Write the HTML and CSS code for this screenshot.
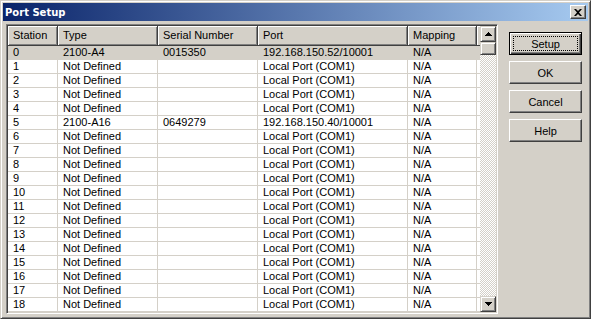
FILE: index.html
```html
<!DOCTYPE html>
<html lang="en">
<head>
    <meta charset="UTF-8">
    <title>Port Setup</title>
    <link rel="stylesheet" href="styles.css">
</head>
<body>
    <div class="window">
        <div class="titlebar">
            <span class="title">Port Setup</span>
            <span class="close">
                <svg width="8" height="7" viewBox="0 0 8 7"><path d="M0 0h2l2 2 2-2h2L5 3.5 8 7H6L4 5 2 7H0l3-3.5z" fill="#000"/></svg>
            </span>
        </div>

        <div class="main">
            <div class="list">
                <div class="grid">
                    <div class="row head">
                        <div class="cell">Station</div>
                        <div class="cell">Type</div>
                        <div class="cell">Serial Number</div>
                        <div class="cell">Port</div>
                        <div class="cell">Mapping</div>
                        <div class="cell filler"></div>
                    </div>
                    <div class="row sel"><div class="cell">0</div><div class="cell">2100-A4</div><div class="cell">0015350</div><div class="cell">192.168.150.52/10001</div><div class="cell">N/A</div><div class="cell"></div></div>
                    <div class="row"><div class="cell">1</div><div class="cell">Not Defined</div><div class="cell"></div><div class="cell">Local Port (COM1)</div><div class="cell">N/A</div><div class="cell"></div></div>
                    <div class="row"><div class="cell">2</div><div class="cell">Not Defined</div><div class="cell"></div><div class="cell">Local Port (COM1)</div><div class="cell">N/A</div><div class="cell"></div></div>
                    <div class="row"><div class="cell">3</div><div class="cell">Not Defined</div><div class="cell"></div><div class="cell">Local Port (COM1)</div><div class="cell">N/A</div><div class="cell"></div></div>
                    <div class="row"><div class="cell">4</div><div class="cell">Not Defined</div><div class="cell"></div><div class="cell">Local Port (COM1)</div><div class="cell">N/A</div><div class="cell"></div></div>
                    <div class="row"><div class="cell">5</div><div class="cell">2100-A16</div><div class="cell">0649279</div><div class="cell">192.168.150.40/10001</div><div class="cell">N/A</div><div class="cell"></div></div>
                    <div class="row"><div class="cell">6</div><div class="cell">Not Defined</div><div class="cell"></div><div class="cell">Local Port (COM1)</div><div class="cell">N/A</div><div class="cell"></div></div>
                    <div class="row"><div class="cell">7</div><div class="cell">Not Defined</div><div class="cell"></div><div class="cell">Local Port (COM1)</div><div class="cell">N/A</div><div class="cell"></div></div>
                    <div class="row"><div class="cell">8</div><div class="cell">Not Defined</div><div class="cell"></div><div class="cell">Local Port (COM1)</div><div class="cell">N/A</div><div class="cell"></div></div>
                    <div class="row"><div class="cell">9</div><div class="cell">Not Defined</div><div class="cell"></div><div class="cell">Local Port (COM1)</div><div class="cell">N/A</div><div class="cell"></div></div>
                    <div class="row"><div class="cell">10</div><div class="cell">Not Defined</div><div class="cell"></div><div class="cell">Local Port (COM1)</div><div class="cell">N/A</div><div class="cell"></div></div>
                    <div class="row"><div class="cell">11</div><div class="cell">Not Defined</div><div class="cell"></div><div class="cell">Local Port (COM1)</div><div class="cell">N/A</div><div class="cell"></div></div>
                    <div class="row"><div class="cell">12</div><div class="cell">Not Defined</div><div class="cell"></div><div class="cell">Local Port (COM1)</div><div class="cell">N/A</div><div class="cell"></div></div>
                    <div class="row"><div class="cell">13</div><div class="cell">Not Defined</div><div class="cell"></div><div class="cell">Local Port (COM1)</div><div class="cell">N/A</div><div class="cell"></div></div>
                    <div class="row"><div class="cell">14</div><div class="cell">Not Defined</div><div class="cell"></div><div class="cell">Local Port (COM1)</div><div class="cell">N/A</div><div class="cell"></div></div>
                    <div class="row"><div class="cell">15</div><div class="cell">Not Defined</div><div class="cell"></div><div class="cell">Local Port (COM1)</div><div class="cell">N/A</div><div class="cell"></div></div>
                    <div class="row"><div class="cell">16</div><div class="cell">Not Defined</div><div class="cell"></div><div class="cell">Local Port (COM1)</div><div class="cell">N/A</div><div class="cell"></div></div>
                    <div class="row"><div class="cell">17</div><div class="cell">Not Defined</div><div class="cell"></div><div class="cell">Local Port (COM1)</div><div class="cell">N/A</div><div class="cell"></div></div>
                    <div class="row"><div class="cell">18</div><div class="cell">Not Defined</div><div class="cell"></div><div class="cell">Local Port (COM1)</div><div class="cell">N/A</div><div class="cell"></div></div>
                </div>

                <div class="vscroll">
                    <div class="sbtn">
                        <svg width="7" height="4" viewBox="0 0 7 4"><path d="M3 0h1v1h1v1h1v1h1v1H0V3h1V2h1V1h1z" fill="#000"/></svg>
                    </div>
                    <div class="thumb"></div>
                    <div class="track"></div>
                    <div class="sbtn">
                        <svg width="7" height="4" viewBox="0 0 7 4"><path d="M0 0h7v1H6v1H5v1H4v1H3V3H2V2H1V1H0z" fill="#000"/></svg>
                    </div>
                </div>
            </div>

            <div class="buttons">
                <button class="btn default">Setup</button>
                <button class="btn">OK</button>
                <button class="btn">Cancel</button>
                <button class="btn">Help</button>
            </div>
        </div>
    </div>
</body>
</html>
```

FILE: styles.css
```css
body {
    margin: 0;
    background-color: #d4d0c8;
    font-family: "Liberation Sans", Arial, sans-serif;
    font-size: 11px;
    color: #000;
}
.window {
    width: 591px;
    height: 319px;
    box-sizing: border-box;
    background-color: #d4d0c8;
    border: 1px solid;
    border-color: #d4d0c8 #404040 #404040 #d4d0c8;
    box-shadow: inset 1px 1px #fff, inset -1px -1px #808080;
    padding: 2px;
    display: flex;
    flex-direction: column;
}
.titlebar {
    height: 18px;
    flex: none;
    background: linear-gradient(to right, #0a246a, #a6caf0);
    display: flex;
    align-items: center;
    justify-content: space-between;
    padding: 0 2px;
}
.title {
    color: #fff;
    font-family: "DejaVu Sans", sans-serif;
    font-weight: bold;
    font-size: 10px;
}
.close {
    width: 16px;
    height: 14px;
    box-sizing: border-box;
    background-color: #d4d0c8;
    border: 1px solid;
    border-color: #fff #404040 #404040 #fff;
    box-shadow: inset -1px -1px #808080;
    display: flex;
    align-items: center;
    justify-content: center;
}
.close svg {
    margin-left: -1px;
}
.main {
    display: flex;
    flex: 1;
    padding: 3px 0 0 3px;
}
.list {
    width: 492px;
    height: 290px;
    box-sizing: border-box;
    border: 1px solid;
    border-color: #808080 #fff #fff #808080;
    box-shadow: inset 1px 1px #404040, inset -1px -1px #d4d0c8;
    padding: 1px;
    display: flex;
    background-color: #fff;
    overflow: hidden;
}
.grid {
    width: 472px;
    overflow: hidden;
}
.row {
    display: grid;
    grid-template-columns: 50px 100px 100px 150px 69px 1fr;
    height: 14px;
    box-sizing: border-box;
    border-bottom: 1px solid #d4d0c8;
}
.cell {
    box-sizing: border-box;
    border-right: 1px solid #d4d0c8;
    padding-left: 5px;
    line-height: 13px;
    white-space: nowrap;
    overflow: hidden;
}
.row.head {
    height: 20px;
    border-bottom: none;
}
.head .cell {
    background-color: #d4d0c8;
    box-shadow: inset 1px 1px #fff, inset -1px -1px #808080;
    border-right: 1px solid #404040;
    border-bottom: 1px solid #404040;
    line-height: 19px;
}
.head .filler {
    border-right: none;
    box-shadow: inset 1px 1px #fff;
}
.row.sel {
    background-color: #d4d0c8;
}
.vscroll {
    width: 16px;
    display: flex;
    flex-direction: column;
    background: repeating-conic-gradient(#d4d0c8 0 25%, #fff 0 50%) 0 0 / 2px 2px;
}
.sbtn, .thumb {
    box-sizing: border-box;
    background-color: #d4d0c8;
    border: 1px solid;
    border-color: #d4d0c8 #404040 #404040 #d4d0c8;
    box-shadow: inset 1px 1px #fff, inset -1px -1px #808080;
}
.sbtn {
    height: 16px;
    display: flex;
    align-items: center;
    justify-content: center;
}
.thumb {
    height: 13px;
}
.track {
    flex: 1;
}
.buttons {
    margin-left: 11px;
    padding-top: 8px;
    display: flex;
    flex-direction: column;
    gap: 6px;
}
.btn {
    position: relative;
    width: 73px;
    height: 23px;
    box-sizing: border-box;
    padding: 0;
    background-color: #d4d0c8;
    border: 1px solid;
    border-color: #fff #404040 #404040 #fff;
    box-shadow: inset -1px -1px #808080;
    font-family: "Liberation Sans", Arial, sans-serif;
    font-size: 11px;
    color: #000;
}
.btn.default {
    border-color: #000;
    box-shadow: inset 1px 1px #fff, inset -1px -1px #404040, inset -2px -2px #808080;
}
.btn.default::after {
    content: "";
    position: absolute;
    top: 3px;
    left: 3px;
    right: 3px;
    bottom: 3px;
    border: 1px dotted #000;
}
```
